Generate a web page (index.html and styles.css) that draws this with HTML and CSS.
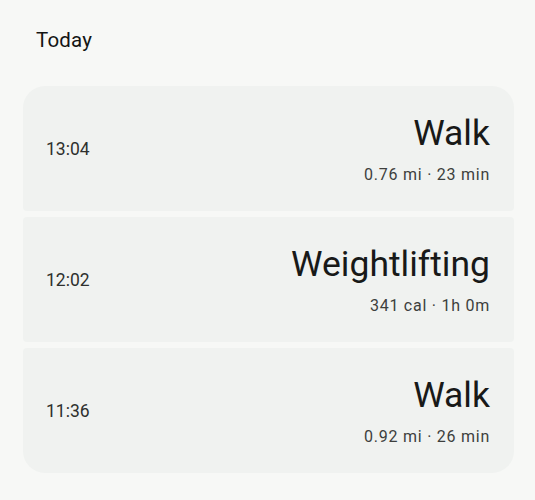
FILE: index.html
```html
<!doctype html>
<html lang="en">
	<head>
		<title>Today</title>
		<meta charset="utf-8">
		<meta name="viewport" content="width=device-width, initial-scale=1.0">

		<link rel="stylesheet" href="styles.css">
	</head>

<body>

	<div class="day">

		<h2 class="day_title">Today</h2>

		<div class="sessions">

			<div class="session">
				<div class="session_time">13:04</div>
				<div class="session_info">
					<div class="session_name">Walk</div>
					<div class="session_stats">0.76 mi · 23 min</div>
				</div>
			</div>

			<div class="session">
				<div class="session_time">12:02</div>
				<div class="session_info">
					<div class="session_name">Weightlifting</div>
					<div class="session_stats">341 cal · 1h 0m</div>
				</div>
			</div>

			<div class="session">
				<div class="session_time">11:36</div>
				<div class="session_info">
					<div class="session_name">Walk</div>
					<div class="session_stats">0.92 mi · 26 min</div>
				</div>
			</div>

		</div>

	</div>

</body>
</html>
```

FILE: styles.css
```css
body { margin: 0; background: #f7f8f6; font-family: Roboto, "Noto Sans", sans-serif; color: #1b1c1b; }

.day { padding: 26px 21px 0 23px; }

.day_title { margin: 0 0 32px 13px; font-size: 20.5px; line-height: 28px; font-weight: 400; letter-spacing: 0.2px; color: #141514; }

.sessions { display: flex; flex-direction: column; gap: 6px; }

.session {
  display: flex;
  align-items: center;
  justify-content: space-between;
  height: 125px;
  padding: 0 24px 0 23px;
  background: #f0f2f0;
  border-radius: 4px;
}
.session:first-child { border-radius: 22px 22px 4px 4px; }
.session:last-child { border-radius: 4px 4px 22px 22px; }

.session_time { font-size: 17.5px; line-height: 24px; color: #2e302e; }

.session_info { display: flex; flex-direction: column; align-items: flex-end; gap: 9px; }
.session_name { font-size: 35.5px; line-height: 44px; color: #181918; }
.session_stats { font-size: 16px; line-height: 22px; letter-spacing: 0.75px; color: #3d3f3d; }
```
